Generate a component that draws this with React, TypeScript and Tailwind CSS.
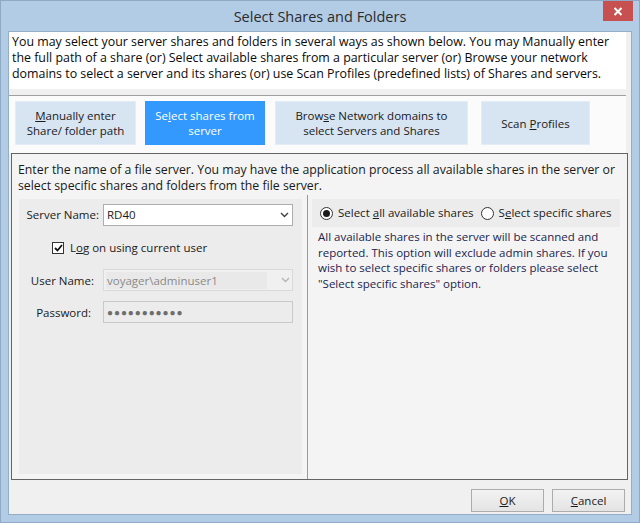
import React from 'react';

const font = { fontFamily: '"Open Sans", "Noto Sans", sans-serif' };

function Chevron({ color = '#404040' }: { color?: string }) {
  return (
    <svg width="9" height="6" viewBox="0 0 9 6" className="shrink-0">
      <polyline points="1,1 4.5,4.5 8,1" fill="none" stroke={color} strokeWidth="1.4" />
    </svg>
  );
}

function TabButton({
  children,
  active,
  className,
}: {
  children: React.ReactNode;
  active?: boolean;
  className: string;
}) {
  return (
    <div
      className={
        'h-[44px] flex items-center justify-center text-center leading-[15px] border ' +
        (active
          ? 'bg-[#3399ff] border-[#3399ff] text-white '
          : 'bg-[#d7e4f2] border-[#e4edf7] text-[#1a1a1a] ') +
        className
      }
    >
      <div>{children}</div>
    </div>
  );
}

export default function App() {
  return (
    <div
      style={font}
      className="w-[640px] h-[523px] bg-[#b3cce5] flex flex-col text-[11.5px] text-[#1a1a1a] border border-[#8fa9c4] overflow-hidden"
    >
      {/* Title bar */}
      <div className="h-[30px] relative flex items-center justify-center shrink-0">
        <span className="text-[14.5px] text-[#2b2b2b] mt-[1px]">Select Shares and Folders</span>
        <div className="absolute right-[6px] top-0 w-[30px] h-[20px] bg-[#c75050] flex items-center justify-center">
          <svg width="10" height="9" viewBox="0 0 10 9">
            <path d="M1.5 1 L8.5 8 M8.5 1 L1.5 8" stroke="white" strokeWidth="2" />
          </svg>
        </div>
      </div>

      {/* Client */}
      <div className="mx-[7px] flex-1 flex flex-col bg-[#f0f0f0] border border-[#94aec8]">
        {/* Instructions */}
        <div className="bg-white h-[57px] px-[3px] pt-[2px] leading-[16px] text-[#0a0a0a] mr-[5px] text-[12.4px] whitespace-nowrap">
          You may select your server shares and folders in several ways as shown below. You may Manually enter
          <br />
          the full path of a share (or) Select available shares from a particular server (or) Browse your network
          <br />
          domains to select a server and its shares (or) use Scan Profiles (predefined lists) of Shares and servers.
        </div>
        <div className="h-[6px] mr-[5px]" />
        <div className="mr-[5px] border-t border-[#a0a0a0]" />

        {/* Tab strip */}
        <div className="h-[57px] mr-[5px] bg-[#fbfbfb] flex items-start pt-[5px] pl-[6px]">
          <TabButton className="w-[121px]">
            <span className="underline">M</span>anually enter
            <br />
            Share/ folder path
          </TabButton>
          <TabButton active className="w-[120px] ml-[9px]">
            Se<span className="underline">l</span>ect shares from
            <br />
            server
          </TabButton>
          <TabButton className="w-[193px] ml-[10px]">
            Brow<span className="underline">s</span>e Network domains to
            <br />
            select Servers and Shares
          </TabButton>
          <TabButton className="w-[109px] ml-[13px]">
            Scan <span className="underline">P</span>rofiles
          </TabButton>
        </div>

        {/* Main panel */}
        <div className="mx-[2px] mr-[3px] h-[327px] border border-[#646464] bg-[#f4f4f4] flex flex-col">
          <div className="px-[6px] pt-[8px] leading-[16px] h-[41px] text-[12.3px] whitespace-nowrap">
            Enter the name of a file server. You may have the application process all available shares in the server or
            <br />
            select specific shares and folders from the file server.
          </div>
          <div className="flex flex-1">
            {/* Left */}
            <div className="w-[296px] border-r border-[#9a9a9a] pl-[7px] pr-[5px] pt-[4px] pb-[5px] flex">
              <div className="flex-1 bg-[#ececec] flex flex-col">
                <div className="flex items-center h-[22px] mt-[5px]">
                  <span className="w-[84px] text-right pr-[4px]">Server Name:</span>
                  <div className="w-[190px] h-[22px] bg-white border border-[#adadad] flex items-center px-[3px] justify-between">
                    <span>RD40</span>
                    <Chevron />
                  </div>
                </div>
                <div className="flex items-center mt-[13px] ml-[33px]">
                  <div className="w-[12px] h-[12px] border border-[#333] bg-white flex items-center justify-center">
                    <svg width="9" height="8" viewBox="0 0 9 8">
                      <polyline points="1,4 3.5,6.5 8,1" fill="none" stroke="#111" strokeWidth="1.8" />
                    </svg>
                  </div>
                  <span className="ml-[6px]">
                    L<span className="underline">o</span>g on using current user
                  </span>
                </div>
                <div className="flex items-center h-[22px] mt-[13px]">
                  <span className="w-[84px] text-right pr-[9px]">User Name:</span>
                  <div className="w-[190px] h-[22px] bg-[#f0f0f0] border border-[#d9d9d9] flex items-center px-[2px] justify-between">
                    <span className="text-[#8a8a8a] bg-[#e9e9e9] flex-1 mr-[14px] pl-[1px]">voyager\adminuser1</span>
                    <Chevron color="#b5b5b5" />
                  </div>
                </div>
                <div className="flex items-center h-[22px] mt-[10px]">
                  <span className="w-[84px] text-right pr-[12px]">Password:</span>
                  <div className="w-[190px] h-[22px] bg-[#ececec] border border-[#c9c9c9] flex items-center px-[3px] text-[#6d6d6d] text-[10px] tracking-[0.9px]">
                    ●●●●●●●●●●●
                  </div>
                </div>
              </div>
            </div>
            {/* Right */}
            <div className="flex-1 pl-[4px] pr-[7px] pt-[4px]">
              <div className="h-[28px] bg-[#ececec] flex items-center pl-[8px]">
                <div className="w-[13px] h-[13px] rounded-full border border-[#333] bg-white flex items-center justify-center">
                  <div className="w-[7px] h-[7px] rounded-full bg-[#1a1a1a]" />
                </div>
                <span className="ml-[5px]">
                  Select <span className="underline">a</span>ll available shares
                </span>
                <div className="w-[13px] h-[13px] rounded-full border border-[#333] bg-white ml-[7px]" />
                <span className="ml-[5px]">
                  S<span className="underline">e</span>lect specific shares
                </span>
              </div>
              <div className="pl-[6px] pt-[2px] leading-[15.7px] text-[#1c2450]">
                All available shares in the server will be scanned and
                <br />
                reported. This option will exclude admin shares. If you
                <br />
                wish to select specific shares or folders please select
                <br />
                "Select specific shares" option.
              </div>
            </div>
          </div>
        </div>

        {/* Buttons */}
        <div className="flex-1 flex justify-end items-end pb-[2px] pr-[6px] gap-[8px]">
          <div className="w-[73px] h-[23px] border border-[#acacac] bg-gradient-to-b from-[#f2f2f2] to-[#e4e4e4] flex items-center justify-center">
            <span>
              <span className="underline">O</span>K
            </span>
          </div>
          <div className="w-[73px] h-[23px] border border-[#acacac] bg-gradient-to-b from-[#f2f2f2] to-[#e4e4e4] flex items-center justify-center">
            <span>
              <span className="underline">C</span>ancel
            </span>
          </div>
        </div>
      </div>
      <div className="h-[7px] shrink-0" />
    </div>
  );
}
